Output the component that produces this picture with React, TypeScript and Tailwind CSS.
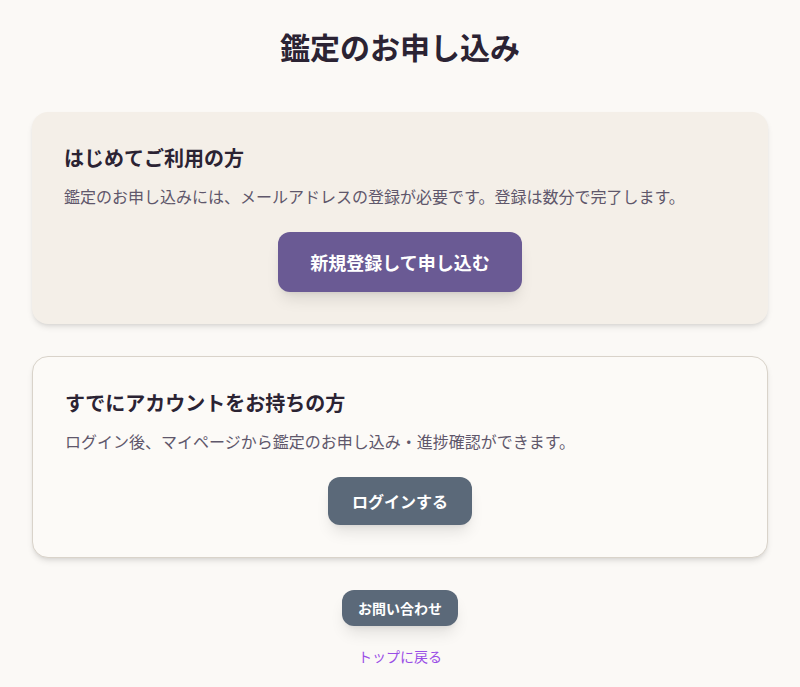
import React from 'react';

const font = { fontFamily: '"Noto Sans CJK JP", "Noto Sans", sans-serif' };

const ApplyPage: React.FC = () => {
  return (
    <div className="min-h-[687px] bg-[#fbf9f6] px-8 pt-[28px] pb-8" style={font}>
      <h1 className="text-center text-3xl font-bold text-[#2b2333]">鑑定のお申し込み</h1>

      <div className="mt-12 flex flex-col gap-8">
        <section className="rounded-2xl bg-[#f4efe8] p-8 shadow-md">
          <h2 className="text-xl font-bold text-[#2b2333]">はじめてご利用の方</h2>
          <p className="mt-3 text-base text-[#5f576b]">
            鑑定のお申し込みには、メールアドレスの登録が必要です。登録は数分で完了します。
          </p>
          <div className="mt-6 flex justify-center">
            <button className="rounded-xl bg-[#6a5a94] px-8 py-4 text-lg font-bold text-white shadow-lg">
              新規登録して申し込む
            </button>
          </div>
        </section>

        <section className="rounded-2xl border border-[#d9d3ca] bg-[#fcfaf7] p-8 shadow-md">
          <h2 className="text-xl font-bold text-[#2b2333]">すでにアカウントをお持ちの方</h2>
          <p className="mt-3 text-base text-[#5f576b]">
            ログイン後、マイページから鑑定のお申し込み・進捗確認ができます。
          </p>
          <div className="mt-6 flex justify-center">
            <button className="rounded-xl bg-[#5b6979] px-6 py-3 text-base font-bold text-white shadow-lg">
              ログインする
            </button>
          </div>
        </section>
      </div>

      <div className="mt-8 flex flex-col items-center">
        <button className="rounded-xl bg-[#5b6979] px-4 py-2 text-sm font-bold text-white shadow-lg">
          お問い合わせ
        </button>
        <a href="#" className="mt-5 text-sm text-[#9a4ee6]">
          トップに戻る
        </a>
      </div>
    </div>
  );
};

export default function App() {
  return <ApplyPage />;
}
